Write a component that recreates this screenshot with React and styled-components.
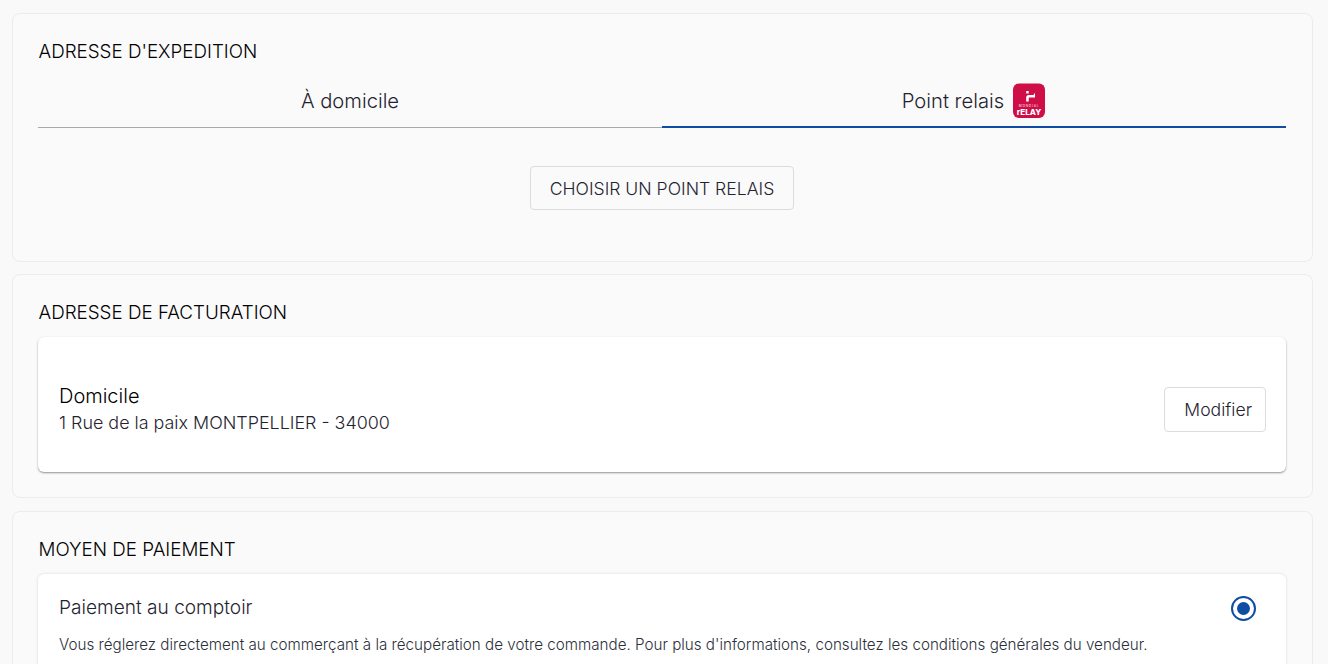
import React from "react";
import styled, { createGlobalStyle } from "styled-components";

const Global = createGlobalStyle`
  html, body { margin: 0; padding: 0; background: #f9f9f9; height: 664px; overflow: hidden; }
  body { font-family: Inter, "Liberation Sans", sans-serif; color: #1f2430; font-weight: 300; }
  * { box-sizing: border-box; }
`;
const Page = styled.main`
  display: flex; flex-direction: column; gap: 12px;
  padding: 13px 15px 0 12px;
`;
const Panel = styled.section`
  background: #fafafa; border: 1px solid #ececec; border-radius: 8px;
  padding: 25px 26px 0 25px;
  height: ${p => p.$h}px;
  margin-top: ${p => p.$mt || 0}px;
  flex: none;
`;
const Title = styled.h2`
  margin: 1px 0 0; font-size: 18.8px; font-weight: 300; line-height: 24px; color: #000; padding-left: .5px;
`;
const Tabs = styled.div`display: grid; grid-template-columns: 1fr 1fr; margin-top: 11px;`;
const Tab = styled.div`
  height: 53px; display: flex; align-items: center; justify-content: center; gap: 8px;
  font-size: 20.2px; color: #1f2430;
  border-bottom: ${p => p.$active ? "2px solid #0e4da4" : "1px solid #a9a9a9"};
  padding-bottom: ${p => p.$active ? 0 : 1}px;
`;
const Center = styled.div`display: flex; justify-content: center; margin-top: 38px;`;
const Button = styled.button`
  font: 300 17.6px Inter, sans-serif; color: #1f2430; background: transparent;
  border: 1px solid #dcdcdc; border-radius: 4px;
  height: ${p => p.$h}px; padding: 0 ${p => p.$pr}px 0 19px;
`;
const Card = styled.div`
  background: #fff; border-radius: 6px;
  box-shadow: 0 1px 2px rgba(0,0,0,.42);
`;
const AddressCard = styled(Card)`
  margin-top: 12px; height: 135px; padding: 10px 20px 0 21px;
  display: flex; align-items: center; justify-content: space-between;
`;
const AddressName = styled.div`font-size: 20px; line-height: 24px; color: #000; margin-top: -1px;`;
const AddressLine = styled.div`font-size: 17.9px; line-height: 24px; color: #1f2430; margin-top: 3px;`;
const PayCard = styled(Card)`
  margin-top: 12px; height: 200px; padding: 21px 20px 21px 21px;
  box-shadow: 0 0 3px rgba(0,0,0,.14);
`;
const PayHead = styled.div`display: flex; justify-content: space-between; align-items: center; padding-right: 10px; height: 24px;`;
const PayName = styled.div`font-size: 19.1px; color: #1f2430;`;
const Radio = styled.span`
  width: 25px; height: 25px; border: 2px solid #0e4da4; border-radius: 50%;
  display: grid; place-items: center; position: relative; top: 1px;
  &::after { content: ""; width: 13px; height: 13px; border-radius: 50%; background: #0e4da4; }
`;
const PayText = styled.p`margin: 14px 0 0; font-size: 15.2px; line-height: 24px; color: #2b2f3a;`;
const Logo = styled.svg`width: 34px; height: 36px; flex: none;`;

const Relay = () => (
  <Logo viewBox="0 0 34 36" aria-label="Mondial Relay">
    <rect x="1" y="0.5" width="32" height="34.5" rx="6" fill="#cf0e47" />
    <path d="M14.2 8h2.5v2.5h-2.5zM14.2 18.5v-4c0-1.7 1-2.6 2.6-2.6h4.7L23 9.8v4.6h-5.3c-.6 0-1 .4-1 1v3.1z" fill="#fff" />
    <text x="17" y="24" textAnchor="middle" fontFamily="Inter" fontSize="3.2" fontWeight="600" letterSpacing=".8" fill="#f3b9cb">MONDIAL</text>
    <text x="17" y="31.5" textAnchor="middle" fontFamily="Inter" fontSize="8" fontWeight="800" fill="#fff">rELAY</text>
  </Logo>
);

export default function App() {
  return (
    <Page>
      <Global />
      <Panel $h={249}>
        <Title>ADRESSE D'EXPEDITION</Title>
        <Tabs>
          <Tab>À domicile</Tab>
          <Tab $active>Point relais <Relay /></Tab>
        </Tabs>
        <Center><Button $h={44} $pr={19}>CHOISIR UN POINT RELAIS</Button></Center>
      </Panel>
      <Panel $h={224}>
        <Title>ADRESSE DE FACTURATION</Title>
        <AddressCard>
          <div>
            <AddressName>Domicile</AddressName>
            <AddressLine>1 Rue de la paix MONTPELLIER - 34000</AddressLine>
          </div>
          <Button $h={45} $pr={13}>Modifier</Button>
        </AddressCard>
      </Panel>
      <Panel $h={260} $mt={1}>
        <Title>MOYEN DE PAIEMENT</Title>
        <PayCard>
          <PayHead>
            <PayName>Paiement au comptoir</PayName>
            <Radio />
          </PayHead>
          <PayText>Vous réglerez directement au commerçant à la récupération de votre commande. Pour plus d'informations, consultez les conditions générales du vendeur.</PayText>
        </PayCard>
      </Panel>
    </Page>
  );
}
